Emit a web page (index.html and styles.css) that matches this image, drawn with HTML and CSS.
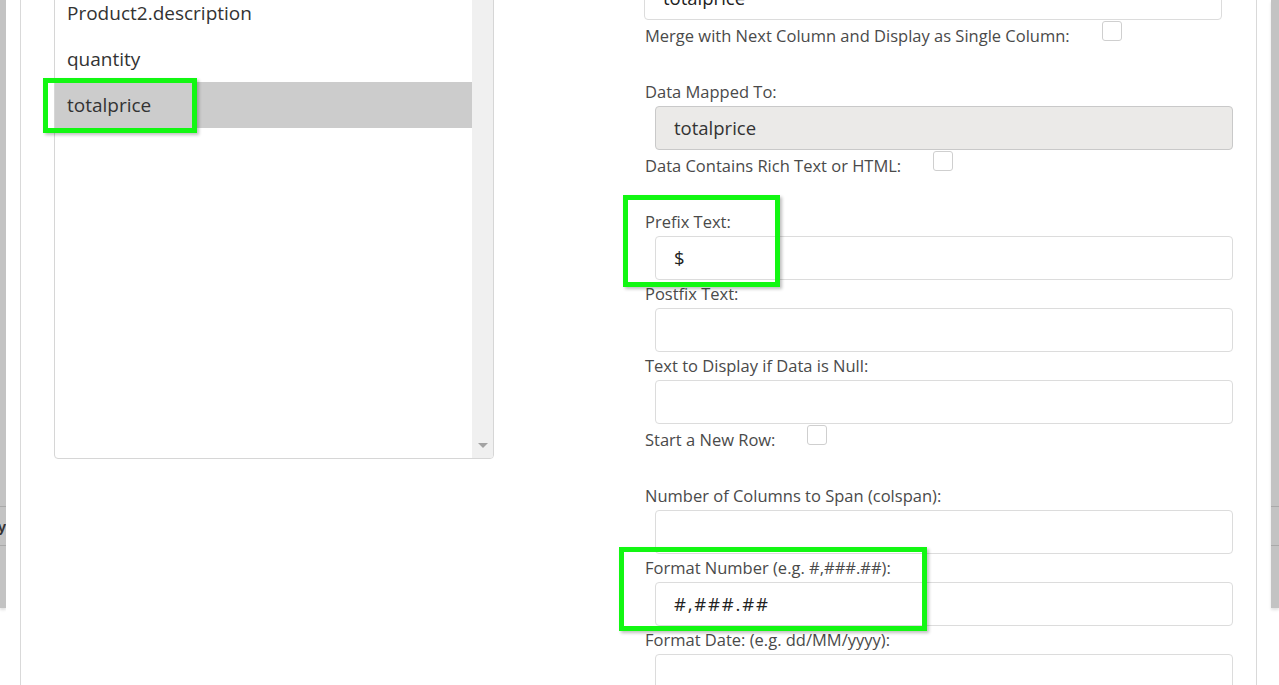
FILE: index.html
```html
<!DOCTYPE html>
<html lang="en">
<head>
<meta charset="utf-8">
<title>Column Settings</title>
<link rel="stylesheet" href="styles.css">
</head>
<body>
<div class="page">
  <div class="strip strip-left">
    <div class="strip-row"><span>Ready</span></div>
  </div>
  <div class="modal">
    <div class="modal-inner">
      <div class="content">
        <div class="list">
          <div class="items">
            <div class="item">Product2.description</div>
            <div class="item">quantity</div>
            <div class="item selected">totalprice</div>
          </div>
          <div class="scrollbar"><span class="arrow"></span></div>
        </div>
        <div class="form">
          <div class="input input-top">totalprice</div>
          <div class="check-row"><span class="label">Merge with Next Column and Display as Single Column:</span><span class="checkbox"></span></div>
          <div class="label">Data Mapped To:</div>
          <div class="input disabled">totalprice</div>
          <div class="check-row"><span class="label">Data Contains Rich Text or HTML:</span><span class="checkbox"></span></div>
          <div class="label">Prefix Text:</div>
          <div class="input">$</div>
          <div class="label">Postfix Text:</div>
          <div class="input"></div>
          <div class="label">Text to Display if Data is Null:</div>
          <div class="input"></div>
          <div class="check-row"><span class="label">Start a New Row:</span><span class="checkbox"></span></div>
          <div class="label">Number of Columns to Span (colspan):</div>
          <div class="input"></div>
          <div class="label">Format Number (e.g. #,###.##):</div>
          <div class="input spaced">#,###.##</div>
          <div class="label">Format Date: (e.g. dd/MM/yyyy):</div>
          <div class="input"></div>
        </div>
      </div>
    </div>
  </div>
  <div class="strip strip-right">
    <div class="strip-row"></div>
  </div>
  <div class="hl hl-list"></div>
  <div class="hl hl-prefix"></div>
  <div class="hl hl-format"></div>
</div>
</body>
</html>
```
FILE: styles.css
```css
html, body {
  margin: 0;
  padding: 0;
  background: #ffffff;
}
body {
  width: 1279px;
  height: 685px;
  overflow: hidden;
  font-family: "Open Sans", "Noto Sans", sans-serif;
}
.page {
  position: relative;
  display: flex;
  height: 685px;
}
.strip {
  flex: none;
  height: 608px;
  background: #c3c3c3;
  box-sizing: border-box;
  padding-top: 506px;
  box-shadow: 0 2px 3px rgba(0, 0, 0, 0.12);
  overflow: hidden;
}
.strip-left { width: 6px; }
.strip-right { width: 8px; }
.strip-row {
  height: 38px;
  border-top: 1px solid #a9a9a9;
  border-bottom: 1px solid #a9a9a9;
  display: flex;
  justify-content: flex-end;
  align-items: center;
  overflow: hidden;
  font-family: "Liberation Sans", sans-serif;
  font-size: 15px;
  font-weight: bold;
  color: #333;
  white-space: nowrap;
}
.modal {
  flex: 1;
  background: #fff;
  padding: 0 14px;
  height: 685px;
}
.modal-inner {
  height: 685px;
  border-left: 1px solid #d9d9d9;
  border-right: 1px solid #d9d9d9;
  overflow: hidden;
}
.content {
  display: flex;
  align-items: flex-start;
  padding-left: 33px;
}
.list {
  width: 440px;
  height: 470px;
  box-sizing: border-box;
  margin-top: -11px;
  border: 1px solid #d6d6d6;
  border-radius: 0 0 4px 4px;
  display: flex;
  background: #fff;
  overflow: hidden;
}
.items {
  flex: 1;
}
.item {
  height: 46px;
  line-height: 46px;
  padding-left: 12px;
  font-size: 19px;
  color: #333;
  white-space: nowrap;
}
.item.selected {
  background: #cccccc;
}
.scrollbar {
  width: 21px;
  background: #f0f0f0;
  display: flex;
  flex-direction: column;
  justify-content: flex-end;
  align-items: center;
  padding-bottom: 10px;
  box-sizing: border-box;
}
.arrow {
  width: 0;
  height: 0;
  border-left: 5px solid transparent;
  border-right: 5px solid transparent;
  border-top: 5px solid #a3a3a3;
}
.form {
  margin-left: 151px;
  margin-top: -24px;
  width: 588px;
  display: flex;
  flex-direction: column;
}
.label {
  height: 28px;
  line-height: 28px;
  font-size: 16.5px;
  color: #4a4a4a;
  white-space: nowrap;
}
.input {
  height: 44px;
  box-sizing: border-box;
  margin-left: 10px;
  width: 578px;
  border: 1px solid #dcdcdc;
  border-radius: 4px;
  background: #fff;
  padding-left: 18px;
  line-height: 42px;
  font-size: 18.5px;
  color: #222;
}
.input.spaced {
  letter-spacing: 1.8px;
}
.input-top {
  margin-left: -1px;
}
.input.disabled {
  background: #ebeae8;
  border-color: #c9c9c9;
  color: #333;
}
.check-row {
  height: 58px;
  display: flex;
  align-items: flex-start;
}
.check-row .label {
  margin-top: 2px;
}
.checkbox {
  width: 20px;
  height: 20px;
  box-sizing: border-box;
  margin-top: 1px;
  margin-left: 32px;
  border: 1px solid #cfcfcf;
  border-radius: 3px;
  background: #fff;
}
.hl {
  position: absolute;
  box-sizing: border-box;
  border: 5px solid #12f712;
  box-shadow: 2px 2px 3px rgba(0, 0, 0, 0.25);
}
.hl-list {
  left: 43px;
  top: 78px;
  width: 154px;
  height: 55px;
}
.hl-prefix {
  left: 623px;
  top: 195px;
  width: 157px;
  height: 92px;
}
.hl-format {
  left: 619px;
  top: 547px;
  width: 308px;
  height: 84px;
}
```
